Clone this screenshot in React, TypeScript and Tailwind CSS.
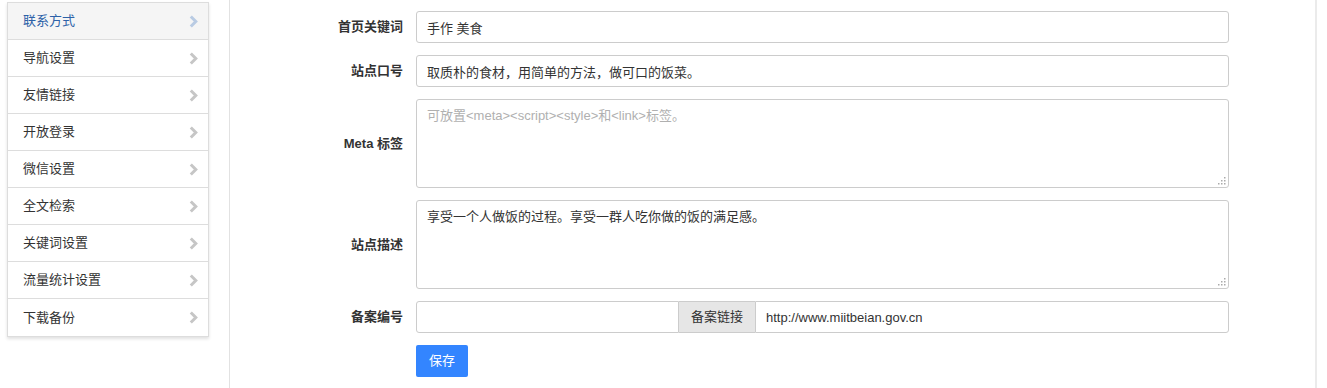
import React from "react";

const items = ["联系方式", "导航设置", "友情链接", "开放登录", "微信设置", "全文检索", "关键词设置", "流量统计设置", "下载备份"];

function Chevron({ active }: { active?: boolean }) {
  return (
    <svg width="9" height="13" viewBox="0 0 9 13" className="shrink-0">
      <polyline points="1.8,1.5 6.8,6.5 1.8,11.5" fill="none" stroke={active ? "#b9cbe3" : "#c6c6c6"} strokeWidth="3" strokeLinejoin="miter" />
    </svg>
  );
}

function Grip() {
  const dots = [
    [6, 0],
    [3, 3],
    [6, 3],
    [0, 6],
    [3, 6],
    [6, 6],
  ];
  return (
    <svg width="8" height="8" viewBox="0 0 8 8" className="absolute right-[3px] bottom-[3px] pointer-events-none">
      {dots.map(([x, y], i) => (
        <rect key={i} x={x} y={y} width="1.5" height="1.5" fill="#aaa" />
      ))}
    </svg>
  );
}

const font = { fontFamily: '"Liberation Sans", "Noto Sans CJK SC", sans-serif' };

function Row({ label, children }: { label: string; children: React.ReactNode }) {
  return (
    <div className="flex items-center mb-[12px]">
      <div className="w-[173px] text-right font-bold text-[13px] text-[#333] leading-[20px]">{label}</div>
      <div className="ml-[13px] w-[813px]">{children}</div>
    </div>
  );
}

export default function App() {
  const inputCls =
    "w-full h-[32px] border border-[#ccc] rounded-[3px] px-[10px] text-[13px] text-[#333] outline-none bg-white placeholder:text-[#aaa]";
  const taCls =
    "block w-full h-[89px] resize-none border border-[#ccc] rounded-[3px] px-[10px] py-[6px] text-[13px] leading-[20px] text-[#333] outline-none bg-white placeholder:text-[#b0b0b0]";
  return (
    <div className="flex h-[388px] bg-white overflow-hidden" style={font}>
      <div className="ml-[7px] mt-[2px] w-[202px] shrink-0 self-start">
        <div className="border border-[#ddd] bg-white shadow-[0_2px_3px_rgba(0,0,0,0.12)]">
          {items.map((t, i) => (
            <div
              key={t}
              className={`flex items-center justify-between h-[37px] pl-[15px] pr-[10px] text-[13px] ${
                i < items.length - 1 ? "border-b border-[#ddd]" : ""
              } ${i === 0 ? "bg-[#f5f5f5] text-[#2d62a8]" : "text-[#333]"}`}
            >
              <span>{t}</span>
              <Chevron active={i === 0} />
            </div>
          ))}
        </div>
      </div>
      <div className="ml-[20px] w-[1088px] shrink-0 border-l border-[#e2e2e2] border-r-2 border-r-[#ebebeb] pt-[11px]">
        <Row label="首页关键词">
          <input className={inputCls} defaultValue="手作 美食" />
        </Row>
        <Row label="站点口号">
          <input className={inputCls} defaultValue="取质朴的食材，用简单的方法，做可口的饭菜。" />
        </Row>
        <Row label="Meta 标签">
          <div className="relative">
            <textarea className={taCls} placeholder="可放置<meta><script><style>和<link>标签。" />
            <Grip />
          </div>
        </Row>
        <Row label="站点描述">
          <div className="relative">
            <textarea className={taCls} defaultValue="享受一个人做饭的过程。享受一群人吃你做的饭的满足感。" />
            <Grip />
          </div>
        </Row>
        <Row label="备案编号">
          <div className="flex h-[32px]">
            <input className="w-[263px] h-[32px] border border-[#ccc] rounded-l-[3px] px-[10px] text-[13px] outline-none" />
            <div className="h-[32px] flex items-center px-[12px] bg-[#e6e6e6] border-y border-[#ccc] text-[13px] text-[#333] shrink-0">
              备案链接
            </div>
            <input
              className="flex-1 min-w-0 h-[32px] border border-[#ccc] rounded-r-[3px] px-[10px] text-[13px] text-[#333] outline-none"
              defaultValue="http://www.miitbeian.gov.cn"
            />
          </div>
        </Row>
        <div className="flex">
          <div className="w-[173px]" />
          <button className="ml-[13px] w-[52px] h-[32px] rounded-[2px] bg-[#3385ff] text-white text-[13px]">保存</button>
        </div>
      </div>
    </div>
  );
}
